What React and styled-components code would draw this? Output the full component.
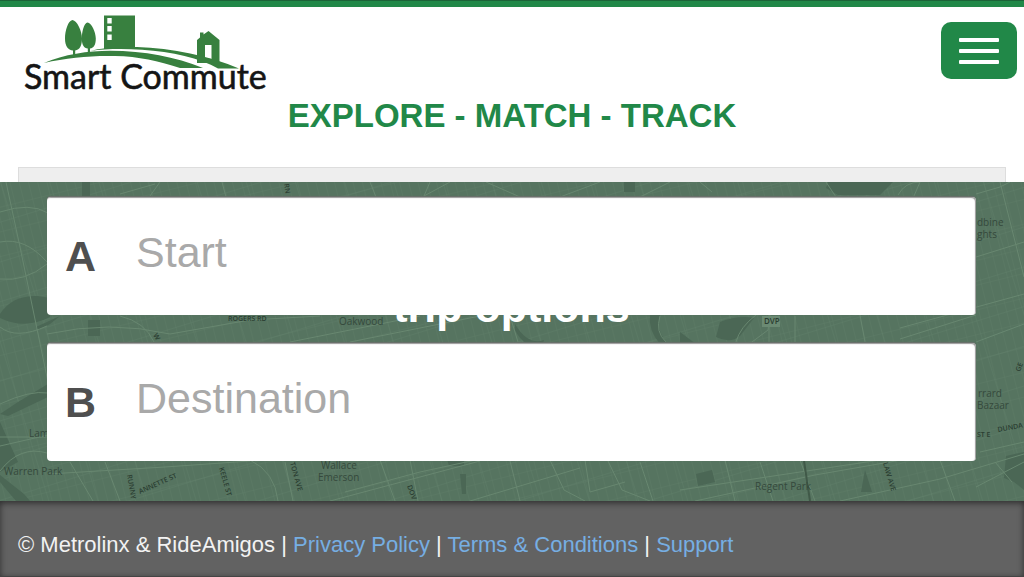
import styled, { createGlobalStyle } from "styled-components";

const GlobalStyle = createGlobalStyle`
  * {
    box-sizing: border-box;
  }

  body {
    margin: 0;
    background-color: #fff;
    font-family: "Liberation Sans", Arial, sans-serif;
  }
`;

const Page = styled.div`
  display: flex;
  flex-direction: column;
  min-height: 100vh;
`;

const StyledHeader = styled.header`
  border-top: 1px solid #1c6338;
  background-color: #fff;
`;

const TopBar = styled.div`
  display: flex;
  align-items: flex-start;
  justify-content: space-between;
  border-top: 6px solid #218848;
  padding: 8px 7px 0 24px;
`;

const LogoLink = styled.a`
  display: block;
  line-height: 0;
`;

const MenuButton = styled.button`
  display: flex;
  flex-direction: column;
  align-items: center;
  justify-content: center;
  gap: 7px;
  width: 76px;
  height: 57px;
  margin-top: 7px;
  padding: 0;
  border: none;
  border-radius: 10px;
  background-color: #218848;
  cursor: pointer;
`;

const MenuBar = styled.span`
  width: 40px;
  height: 4px;
  border-radius: 1px;
  background-color: #fff;
`;

const Tagline = styled.p`
  margin: 3px 0 33px;
  color: #218848;
  font-size: 33px;
  font-weight: 700;
  line-height: 36px;
  text-align: center;
`;

const Panel = styled.div`
  height: 15px;
  margin: 0 18px;
  border: 1px solid #ddd;
  border-bottom: none;
  background-color: #eee;
`;

const Hero = styled.main`
  position: relative;
  display: grid;
  padding: 15px 48px 40px 47px;
  background-color: #587661;
  overflow: hidden;
`;

const StyledMap = styled.svg`
  position: absolute;
  inset: 0;
  width: 100%;
  height: 100%;
`;

/* title and form share one grid cell, the form lies on top */
const HeroTitle = styled.h1`
  position: relative;
  grid-area: 1 / 1;
  align-self: center;
  margin: 0;
  padding-bottom: 44px;
  color: #fff;
  font-size: 43px;
  line-height: 48px;
  text-align: center;
`;

const TripForm = styled.form`
  position: relative;
  grid-area: 1 / 1;
  display: flex;
  flex-direction: column;
  gap: 28px;
`;

const Field = styled.div`
  display: flex;
  align-items: center;
  height: 118px;
  padding: 0 18px;
  border-radius: 4px;
  background-color: #fff;
  box-shadow: inset -1px 1px 1px #999, 0 -1px 1px #6b706c;
`;

const FieldLabel = styled.label`
  width: 71px;
  color: #4f4f4f;
  font-size: 43px;
  font-weight: 700;
  line-height: 50px;
`;

const FieldInput = styled.input`
  flex: 1;
  min-width: 0;
  height: 50px;
  margin-bottom: 8px;
  padding: 0;
  border: none;
  outline: none;
  background: transparent;
  color: #4f4f4f;
  font-family: inherit;
  font-size: 43px;

  &::placeholder {
    color: #a9a9a9;
    opacity: 1;
  }
`;

const StyledFooter = styled.footer`
  flex: 1;
  padding: 31px 18px 18px;
  border-bottom: 1px solid #444;
  background-color: #626262;
  box-shadow: inset 0 2px 6px rgba(0, 0, 0, 0.55);
  color: #f2f2f2;
  font-size: 22px;
  line-height: 26px;
`;

const FooterLink = styled.a`
  color: #76aee3;
  text-decoration: none;
`;

function Logo() {
  return (
    <svg width="244" height="80" viewBox="24 15 244 80" role="img" aria-label="Smart Commute">
      <g fill="#38803f">
        <path d="M72.500 20C68 20.500 65 31 65 38.500C65 46 68 50 73 50.500V56H75.200V50.500C80 50 82 45 82 38.500C82 31 77 20.500 72.500 20Z" />
        <path d="M87.500 22.500C84 23 81.800 32 81.800 38.500C81.800 45 84 48.200 87.800 48.500V52H90V48.500C94 48 95.800 44.500 95.800 38.500C95.800 32 91.500 23 87.500 22.500Z" />
        <path d="M104 15.500H135V49H104ZM107.300 18V23.500H111.700V18ZM107.300 26V31.500H111.700V26ZM107.300 34.500V40H111.700V34.500Z" fillRule="evenodd" />
        <path d="M44 63C64 54.500 88 50.800 110 50.800C145 50.800 175 57 203 68H180C158 61 139 56.500 115 56C91 55.500 67 57.500 44 63Z" />
        <path d="M90 51C100 48 117 46.500 137 47C172 48 210 56 239 68.500H218C200 58.500 172 51.500 142 49.800C122 48.500 105 49 90 51Z" />
        <path d="M197 40L200 37.500V32.500H203.500V34.500L208.500 31L219.500 40V63H197ZM205 45V58L211.500 59V45Z" fillRule="evenodd" />
      </g>
      <text
        x="24"
        y="89"
        fill="#151515"
        stroke="#151515"
        strokeWidth="0.6"
        fontFamily="Lato, sans-serif"
        fontSize="34"
      >
        Smart Commute
      </text>
    </svg>
  );
}

const areas = [
  "M0 132Q12 113 38 114L50 116V135Q25 148 0 136Z",
  "M36 145L60 134L50 142L38 148Z",
  "M0 232L18 220L48 202V215L8 234Z",
  "M0 240L18 280L0 290Z",
  "M0 293L24 312L30 319H16L0 300Z",
  "M82 0H90V16H82Z",
  "M624 0H635V10H624Z",
  "M828 0H893L880 13H838L826 6Z",
  "M515 142Q528 164 544 158L542 166Q524 166 515 148Z",
  "M650 133H660Q656 150 668 162H660Q648 148 650 133Z",
  "M720 140Q738 133 754 136L740 154Q730 162 716 155Z",
  "M680 150L700 165H680Z",
  "M447 277H464V284H449Z",
  "M460 292H466V312H462Z",
  "M696 292L712 288L715 300L698 304Z",
  "M865 288L872 310H861Z",
  "M1006 274L1024 270V308L1014 300L1004 296Z",
  "M88 138H100V154H88Z",
];

const roads = [
  "M0 30Q30 20 48 31M6 0L20 65L48 200M0 145Q16 158 47 144M0 60Q25 55 47 80M0 97Q25 100 47 82",
  "M120 12L155 2M160 0L150 14M222 0L226 15M370 0L376 15M424 14L450 0M430 0L424 14M486 0L520 15M560 15L600 0M640 15L670 0",
  "M47 152Q110 138 170 152L250 138L320 134M120 134Q145 140 154 160M290 160L420 134M350 160L480 134M510 134L518 160M660 134Q655 150 666 160",
  "M756 133Q740 145 736 160M770 133L768 148L752 160M769 133V160M700 0L712 10M826 0L836 15M898 13Q905 0 920 0L914 14M795 134V160M860 133L865 160",
  "M976 12L1000 5L1010 0M1000 0L1024 95M976 75L1024 60M900 146L1024 112M900 157L976 133M976 160L1024 142M980 270L1024 260M976 305L1024 280",
  "M0 264L48 253M0 222Q30 208 48 211M0 289Q20 263 47 271M48 292L165 285L250 279M0 255H48M70 280L93 319M105 280L120 319M250 278Q275 290 278 319M285 280L293 319",
  "M330 319L480 279M345 310L420 290L480 277M380 278L395 319M410 278L418 319M510 279L520 319M470 319L580 286M550 278L564 308L585 319M585 278L590 310L625 300M608 279L622 308L650 319M640 280L653 319",
  "M680 308L880 278M695 319L815 293L976 265M800 278L815 319M840 319L940 297L1024 272M940 278L955 319M995 280L1012 300M725 278L735 319M760 280L773 319",
];

const labels = [
  { text: "Oakwood", x: 339, y: 143, size: 10 },
  { text: "DVP", x: 764, y: 142, size: 8, bold: true },
  { text: "ROGERS RD", x: 228, y: 139, size: 7, bold: true },
  { text: "dbine", x: 977, y: 44, size: 10 },
  { text: "ghts", x: 977, y: 56, size: 10 },
  { text: "rrard", x: 978, y: 215, size: 10 },
  { text: "Bazaar", x: 977, y: 227, size: 10 },
  { text: "ST E", x: 977, y: 255, size: 7, bold: true },
  { text: "DUNDA", x: 998, y: 250, size: 7, bold: true, angle: -10 },
  { text: "GE", x: 1020, y: 190, size: 7, bold: true, angle: -70 },
  { text: "W", x: 153, y: 153, size: 7, bold: true, angle: 60 },
  { text: "RN", x: 284, y: 2, size: 7, bold: true, angle: 80 },
  { text: "Lam", x: 29, y: 255, size: 10 },
  { text: "Warren Park", x: 4, y: 293, size: 10 },
  { text: "RUNNY", x: 127, y: 293, size: 7, bold: true, angle: 80 },
  { text: "ANNETTE ST", x: 140, y: 312, size: 7, bold: true, angle: -24 },
  { text: "KEELE ST", x: 219, y: 286, size: 7, bold: true, angle: 74 },
  { text: "TON AVE", x: 290, y: 281, size: 7, bold: true, angle: 74 },
  { text: "Wallace", x: 321, y: 287, size: 10 },
  { text: "Emerson", x: 318, y: 299, size: 10 },
  { text: "DOV", x: 407, y: 304, size: 7, bold: true, angle: 70 },
  { text: "Regent Park", x: 755, y: 308, size: 10 },
  { text: "LAW AVE", x: 883, y: 281, size: 7, bold: true, angle: 74 },
];

function CityMap() {
  return (
    <StyledMap viewBox="0 0 1024 319" preserveAspectRatio="xMidYMid slice" aria-hidden="true">
      <defs>
        <pattern id="blocks" width="9" height="24" patternUnits="userSpaceOnUse" patternTransform="rotate(-14)">
          <path d="M0 0H9M0 0V24" stroke="#688670" fill="none" />
        </pattern>
        <pattern id="streets" width="47" height="38" patternUnits="userSpaceOnUse" patternTransform="rotate(-17)">
          <path d="M0 0H47M0 0V38" stroke="#66866f" fill="none" />
        </pattern>
      </defs>
      <rect width="1024" height="319" fill="#567460" />
      <rect width="1024" height="319" fill="url(#blocks)" opacity="0.45" />
      <rect width="1024" height="319" fill="url(#streets)" opacity="0.6" />
      {areas.map((d) => (
        <path key={d} d={d} fill="#4b6755" />
      ))}
      {roads.map((d) => (
        <path key={d} d={d} fill="none" stroke="#688770" />
      ))}
      <path d="M804 279L810 319" stroke="#405948" strokeWidth="2" />
      <rect x="762" y="134" width="18" height="11" fill="#6b8a73" />
      {labels.map(({ text, x, y, size, bold, angle = 0 }) => (
        <text
          key={text}
          x={x}
          y={y}
          transform={`rotate(${angle} ${x} ${y})`}
          fill={bold ? "#2b3e32" : "#35493c"}
          fontFamily="Open Sans, sans-serif"
          fontSize={size}
          fontWeight={bold ? 600 : 400}
        >
          {text}
        </text>
      ))}
    </StyledMap>
  );
}

function TripField({ id, letter, placeholder }) {
  return (
    <Field>
      <FieldLabel htmlFor={id}>{letter}</FieldLabel>
      <FieldInput id={id} type="text" placeholder={placeholder} />
    </Field>
  );
}

function App() {
  return (
    <>
      <GlobalStyle />
      <Page>
        <StyledHeader>
          <TopBar>
            <LogoLink href="#">
              <Logo />
            </LogoLink>
            <MenuButton type="button" aria-label="Menu">
              <MenuBar />
              <MenuBar />
              <MenuBar />
            </MenuButton>
          </TopBar>
          <Tagline>EXPLORE - MATCH - TRACK</Tagline>
          <Panel />
        </StyledHeader>
        <Hero>
          <CityMap />
          <HeroTitle>trip options</HeroTitle>
          <TripForm>
            <TripField id="start" letter="A" placeholder="Start" />
            <TripField id="destination" letter="B" placeholder="Destination" />
          </TripForm>
        </Hero>
        <StyledFooter>
          © Metrolinx &amp; RideAmigos | <FooterLink href="#privacy">Privacy Policy</FooterLink> |{" "}
          <FooterLink href="#terms">Terms &amp; Conditions</FooterLink> |{" "}
          <FooterLink href="#support">Support</FooterLink>
        </StyledFooter>
      </Page>
    </>
  );
}

export default App;
